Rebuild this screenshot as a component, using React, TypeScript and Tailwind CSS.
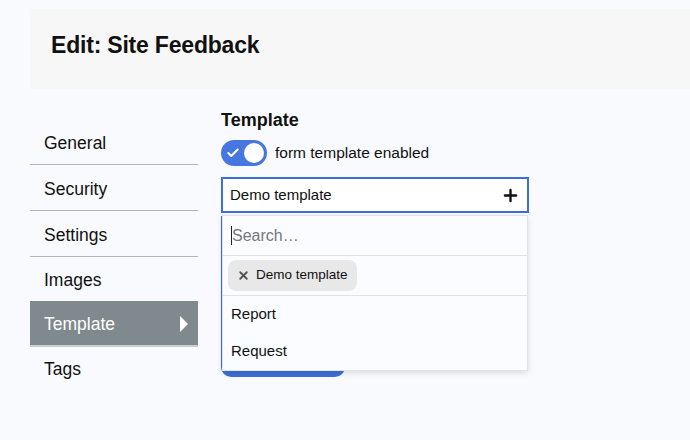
import { Plus, X, Check } from "lucide-react";

const navItems = ["General", "Security", "Settings", "Images", "Template", "Tags"];

export default function App() {
  const active = "Template";

  return (
    <div className="w-[690px] h-[440px] overflow-hidden bg-[#f9fafe] font-['Liberation_Sans',Arial,sans-serif] text-[#111]">
      {/* header */}
      <div className="ml-[30px] mt-[9px] h-[80px] bg-[#f7f7f7] flex items-center pl-[21px] pb-[8px]">
        <h1 className="text-[23px] font-bold tracking-[-0.2px]">Edit: Site Feedback</h1>
      </div>

      <div className="flex mt-[30px] ml-[30px]">
        {/* sidebar */}
        <nav className="w-[168px] flex flex-col">
          {navItems.map((item, i) => (
            <div
              key={item}
              className={
                item === active
                  ? "h-[46px] flex items-center justify-between pt-[2px] pl-[14px] pr-[10px] bg-[#7f898e] text-white border-b-2 border-[#c9cdd0]"
                  : i < 3
                  ? "h-[46px] flex items-center pt-[3px] pl-[14px] border-b border-[#b5b5b5]"
                  : i === 3
                  ? "h-[44px] flex items-center pt-[2px] pl-[14px]"
                  : "h-[45px] flex items-center pl-[14px]"
              }
            >
              <span className="text-[17.5px]">{item}</span>
              {item === active && (
                <span className="w-0 h-0 border-y-[8px] border-y-transparent border-l-[8px] border-l-white" />
              )}
            </div>
          ))}
        </nav>

        {/* content */}
        <div className="ml-[23px] -mt-[12px] w-[308px]">
          <h2 className="text-[18px] font-bold">Template</h2>
          <div className="flex items-center gap-[8px] mt-[6px]">
            <div className="w-[46px] h-[26px] rounded-full bg-[#4677e0] relative flex items-center">
              <Check className="ml-[5px] text-white" size={14} strokeWidth={3.5} />
              <span className="absolute right-[3px] top-[3px] w-[20px] h-[20px] rounded-full bg-white" />
            </div>
            <span className="text-[15.5px]">form template enabled</span>
          </div>

          <div className="relative mt-[11px]">
            <div className="h-[36px] border-2 border-[#3d6fdc] bg-white flex items-center justify-between pl-[7px] pr-[7px]">
              <span className="text-[15px]">Demo template</span>
              <Plus size={19} strokeWidth={3} className="text-[#111]" />
            </div>

            {/* button behind dropdown */}
            <div className="mt-[3px] w-[124px] h-[161px] rounded-b-[10px] bg-[#3f6fd6]" />

            {/* dropdown */}
            <div className="absolute left-[1px] right-[1px] top-[38px] bg-[#fbfcff] border border-[#e3e3e3] shadow-[0_2px_6px_rgba(0,0,0,0.12)]">
              <div className="h-[40px] flex items-center pl-[8px] border-b border-[#e2e2e2]">
                <span className="w-px h-[19px] bg-[#222]" />
                <span className="text-[16px] text-[#777]">Search…</span>
              </div>
              <div className="h-[40px] flex items-center pl-[5px] border-b border-[#e2e2e2]">
                <div className="h-[31px] px-[9px] rounded-[8px] bg-[#e8e8e8] flex items-center gap-[6px]">
                  <X size={13} strokeWidth={3.5} className="text-[#555]" />
                  <span className="text-[13.5px]">Demo template</span>
                </div>
              </div>
              <div className="h-[37px] flex items-center pl-[8px] text-[15px]">Report</div>
              <div className="h-[37px] flex items-center pl-[8px] text-[15px]">Request</div>
            </div>
          </div>
        </div>
      </div>
    </div>
  );
}
